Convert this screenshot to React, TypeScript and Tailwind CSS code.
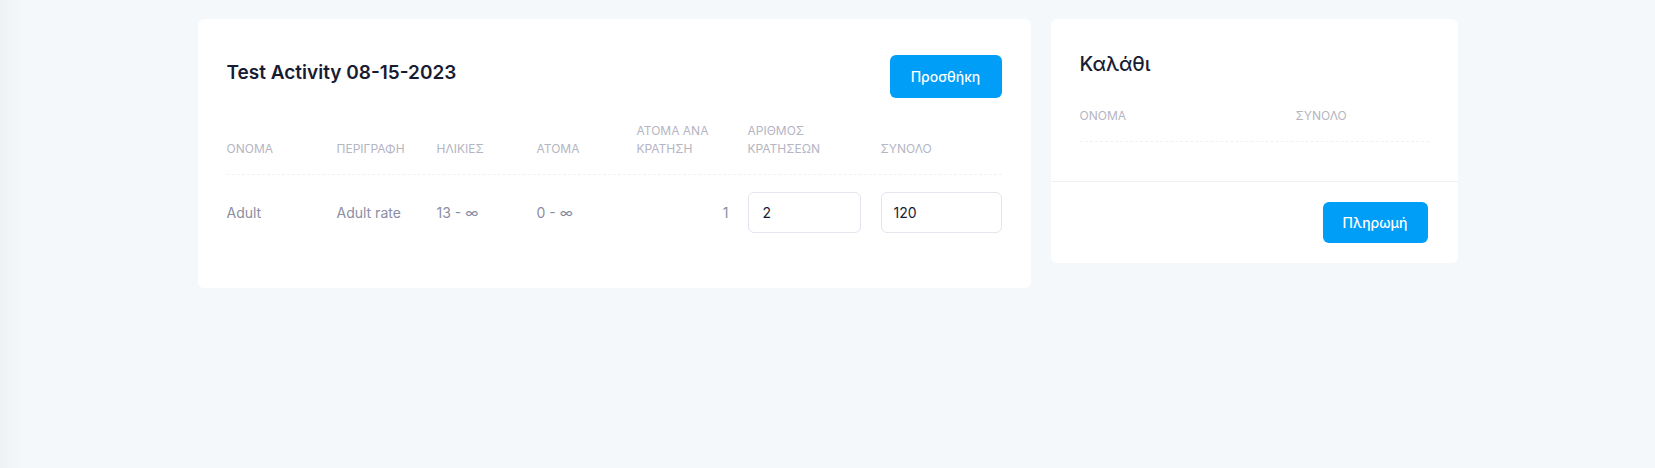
import React from 'react'

const font = { fontFamily: 'Inter, "Noto Sans", sans-serif' }

const headers = [
  ['ΟΝΟΜΑ'],
  ['ΠΕΡΙΓΡΑΦΗ'],
  ['ΗΛΙΚΙΕΣ'],
  ['ΑΤΟΜΑ'],
  ['ΑΤΟΜΑ ΑΝΑ', 'ΚΡΑΤΗΣΗ'],
  ['ΑΡΙΘΜΟΣ', 'ΚΡΑΤΗΣΕΩΝ'],
  ['ΣΥΝΟΛΟ'],
]

export default function App() {
  return (
    <div
      className="min-h-[468px] w-full bg-[#f5f8fa] bg-[linear-gradient(to_right,#eff2f5_0px,#f5f8fa_22px)]"
      style={font}
    >
      <div className="mx-auto flex w-[1260px] items-start gap-5 pt-[19px]">
        {/* Activity card */}
        <div className="w-[833px] rounded-md bg-white px-[29px] pb-[55px] pt-[36px]">
          <div className="flex items-start justify-between">
            <h2 className="mt-[4px] text-[19px] font-semibold text-[#181c32]">Test Activity 08-15-2023</h2>
            <button className="h-[43px] w-[112px] rounded-md bg-[#009ef7] text-[14px] font-medium text-white">
              Προσθήκη
            </button>
          </div>

          <div className="mt-[24px] grid grid-cols-[110px_100px_100px_100px_111px_133px_121px] items-end border-b border-dashed border-[#eff2f5] pb-[16px] text-[12px] font-normal leading-[18px] text-[#b5b5c3]">
            {headers.map((h, i) => (
              <div key={i}>
                {h.map(line => (
                  <div key={line}>{line}</div>
                ))}
              </div>
            ))}
          </div>

          <div className="grid grid-cols-[110px_100px_100px_100px_111px_133px_121px] items-center pt-[17px] text-[14px] text-[#8a8ea3]">
            <div>Adult</div>
            <div>Adult rate</div>
            <div>13 - ∞</div>
            <div>0 - ∞</div>
            <div className="pr-[19px] text-right">1</div>
            <div className="pr-[20px]">
              <input
                defaultValue="2"
                className="h-[41px] w-full rounded-md border border-[#e4e6ef] px-[14px] text-[14px] text-[#181c32] outline-none"
              />
            </div>
            <div>
              <input
                defaultValue="120"
                className="h-[41px] w-full rounded-md border border-[#e4e6ef] px-[12px] text-[14px] text-[#181c32] outline-none"
              />
            </div>
          </div>
        </div>

        {/* Cart card */}
        <div className="w-[407px] rounded-md bg-white">
          <div className="px-[29px] pt-[30px]">
            <h2 className="text-[20px] font-medium text-[#181c32]">Καλάθι</h2>
            <div className="mt-[28px] grid grid-cols-[216px_1fr] border-b border-dashed border-[#eff2f5] pb-[16px] text-[12px] font-normal text-[#b5b5c3]">
              <div>ΟΝΟΜΑ</div>
              <div>ΣΥΝΟΛΟ</div>
            </div>
          </div>
          <div className="mt-[39px] flex justify-end border-t border-[#eff2f5] px-[30px] pb-[20px] pt-[20px]">
            <button className="h-[41px] w-[105px] rounded-md bg-[#009ef7] text-[14px] font-medium text-white">
              Πληρωμή
            </button>
          </div>
        </div>
      </div>
    </div>
  )
}
